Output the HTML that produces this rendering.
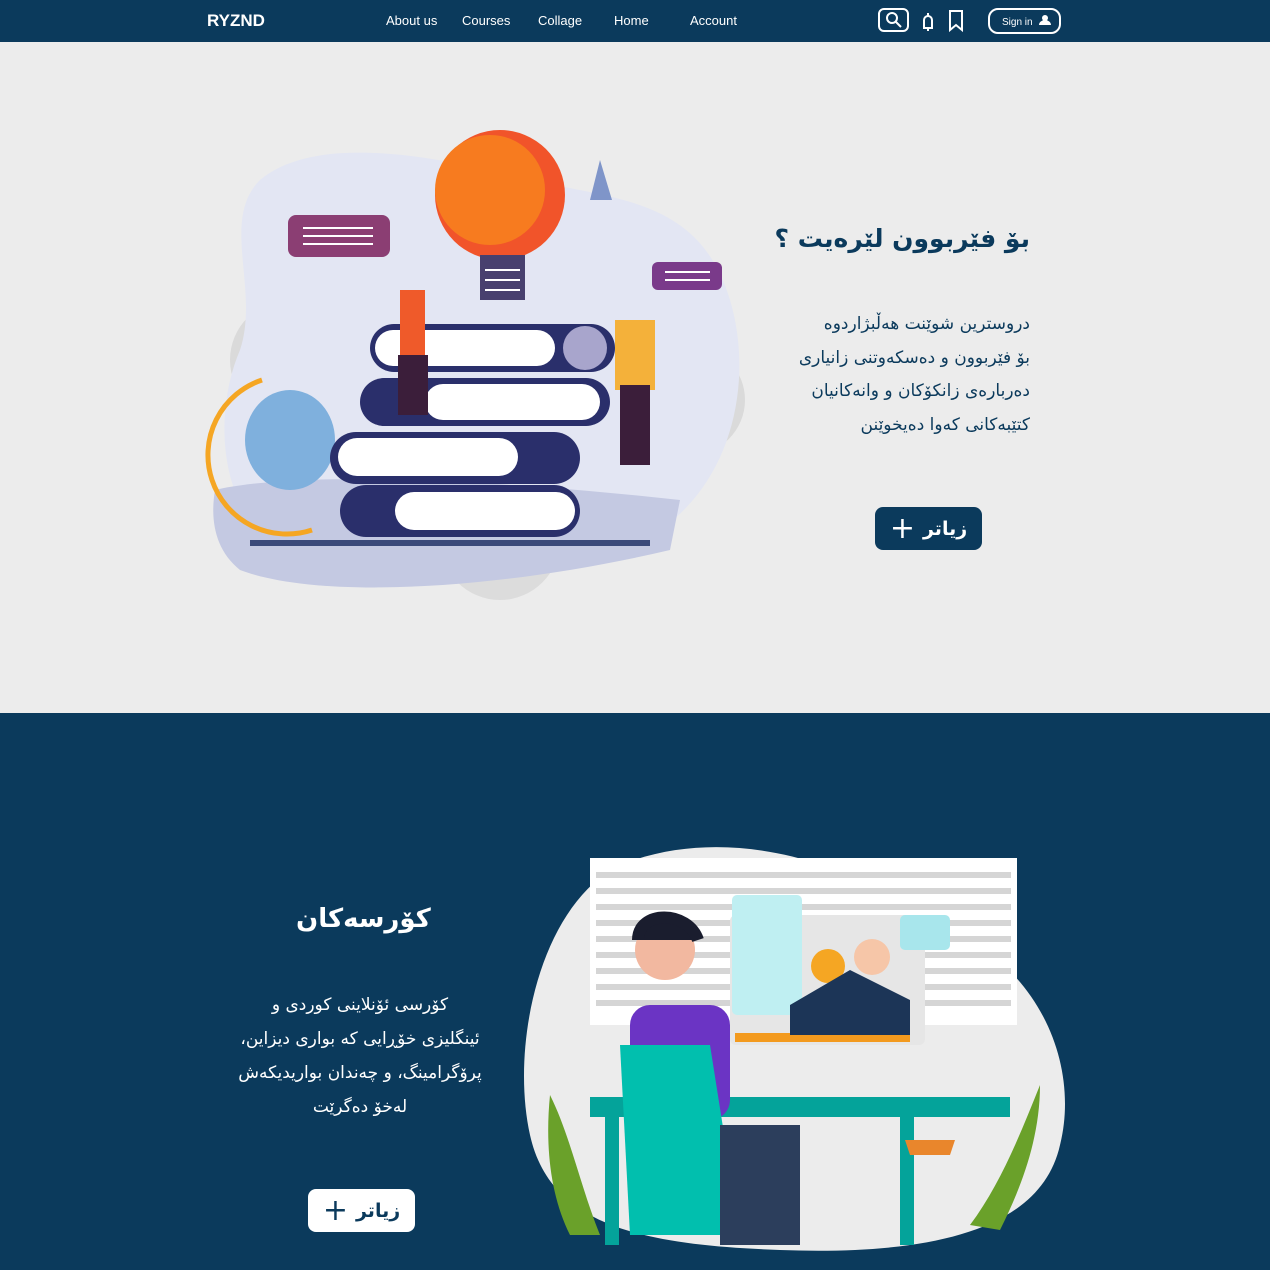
<!DOCTYPE html>
<html><head><meta charset="utf-8"><style>
*{margin:0;padding:0;box-sizing:border-box}
body{width:1270px;height:1270px;overflow:hidden;font-family:"Liberation Sans","DejaVu Sans",sans-serif;background:#ececec;position:relative}
.nav{position:absolute;left:0;top:0;width:1270px;height:42px;background:#0b3a5c;color:#fff}
.nav span{position:absolute;top:13px;font-size:13px}
.sec2{position:absolute;left:0;top:713px;width:1270px;height:557px;background:#0b3a5c}
.ar{font-family:"DejaVu Sans",sans-serif;direction:rtl;position:absolute}
.btn{position:absolute;border-radius:8px;font-weight:bold;font-size:19px;display:flex;align-items:center;justify-content:center;gap:8px;font-family:"DejaVu Sans",sans-serif}
</style></head><body>
<div class="nav">
<span style="left:207px;top:11px;font-weight:bold;font-size:17px">RYZND</span>
<span style="left:386px">About us</span><span style="left:462px">Courses</span><span style="left:538px">Collage</span><span style="left:614px">Home</span><span style="left:690px">Account</span>
<svg style="position:absolute;left:878px;top:8px" width="90" height="26" fill="none" stroke="#fff" stroke-width="2"><rect x="1" y="1" width="29" height="22" rx="5"/><circle cx="14" cy="10" r="5"/><path d="M18 14l5 5"/><path d="M45 20h10M46 19v-7a4 4 0 0 1 8 0v7M50 5v3M50 21v2"/><path d="M72 3h12v19l-6-5-6 5z"/></svg>
<div style="position:absolute;left:988px;top:8px;width:73px;height:26px;border:2px solid #fff;border-radius:10px;font-size:10px;padding:5px 0 0 12px">Sign in <svg width="12" height="10" style="margin-left:4px"><circle cx="6" cy="3" r="3" fill="#fff"/><path d="M0 10a6 5 0 0 1 12 0z" fill="#fff"/></svg></div>
</div>

<svg style="position:absolute;left:200px;top:120px" width="560" height="480">
<circle cx="90" cy="240" r="60" fill="#dadada"/><circle cx="490" cy="280" r="55" fill="#dadada"/><circle cx="300" cy="420" r="60" fill="#dcdcdc"/>
<path d="M60 60C120 10 250 40 330 60C420 80 500 80 530 180C560 280 520 420 380 440C280 460 180 470 100 440C20 410 10 300 40 230C60 170 20 100 60 60z" fill="#e3e6f3"/>
<path d="M15 370C100 350 300 360 480 380L470 430C300 470 120 480 40 450C15 430 10 400 15 370z" fill="#c4c9e2"/>
<path d="M390 80l10 -40 12 40z" fill="#7f95c9"/>
<ellipse cx="90" cy="320" rx="45" ry="50" fill="#7fb0dd"/><path d="M62 260a70 70 0 0 0 50 150" stroke="#f5a623" stroke-width="5" fill="none"/>
<rect x="50" y="420" width="400" height="6" fill="#3b4a7a"/>
<g><rect x="140" y="365" width="240" height="52" rx="26" fill="#2a2f6b"/><rect x="195" y="372" width="180" height="38" rx="19" fill="#fff"/>
<rect x="130" y="312" width="250" height="52" rx="26" fill="#2a2f6b"/><rect x="138" y="318" width="180" height="38" rx="19" fill="#fff"/>
<rect x="160" y="258" width="250" height="48" rx="24" fill="#2a2f6b"/><rect x="225" y="264" width="175" height="36" rx="18" fill="#fff"/>
<rect x="170" y="204" width="245" height="48" rx="24" fill="#2a2f6b"/><rect x="175" y="210" width="180" height="36" rx="18" fill="#fff"/><circle cx="385" cy="228" r="22" fill="#a8a5cc"/></g>
<circle cx="300" cy="75" r="65" fill="#f1542a"/><circle cx="290" cy="70" r="55" fill="#f77b1f"/><rect x="280" y="135" width="45" height="45" fill="#48406e"/>
<path d="M285 150h35M285 160h35M285 170h35" stroke="#fff" stroke-width="2"/>
<rect x="88" y="95" width="102" height="42" rx="8" fill="#8b3e73"/><path d="M103 108h70M103 116h70M103 124h70" stroke="#fff" stroke-width="2"/>
<rect x="452" y="142" width="70" height="28" rx="6" fill="#7a3a8a"/><path d="M465 152h45M465 160h45" stroke="#fff" stroke-width="2"/>
<rect x="200" y="170" width="25" height="65" fill="#ef5a2a"/><rect x="198" y="235" width="30" height="60" fill="#3b1e3a"/>
<rect x="415" y="200" width="40" height="70" fill="#f4b13a"/><rect x="420" y="265" width="30" height="80" fill="#3b1e3a"/>
</svg>

<div class="ar" style="right:240px;top:224px;font-size:25px;font-weight:bold;color:#0b3a5c">بۆ فێربوون لێرەیت ؟</div>
<div class="ar" style="right:240px;top:308px;font-size:17px;line-height:33.5px;color:#0b3a5c;text-align:right;width:300px">دروسترین شوێنت هەڵبژاردوە<br>بۆ فێربوون و دەسکەوتنی زانیاری<br>دەربارەی زانکۆکان و وانەکانیان<br>کتێبەکانی کەوا دەیخوێنن</div>
<div class="btn" style="left:875px;top:507px;width:107px;height:43px;background:#0b3a5c;color:#fff"><span style="font-size:30px;font-weight:normal">+</span> زیاتر</div>

<div class="sec2"></div>
<div class="ar" style="left:296px;top:904px;font-size:26px;font-weight:bold;color:#fff;direction:rtl">کۆرسەکان</div>
<div class="ar" style="left:225px;top:988px;width:270px;font-size:17px;line-height:34px;color:#fff;text-align:center">کۆرسی ئۆنلاینی کوردی و<br>ئینگلیزی خۆڕایی کە بواری دیزاین،<br>پرۆگرامینگ، و چەندان بواریدیکەش<br>لەخۆ دەگرێت</div>
<div class="btn" style="left:308px;top:1189px;width:107px;height:43px;background:#fff;color:#0b3a5c"><span style="font-size:30px;font-weight:normal">+</span> زیاتر</div>

<svg style="position:absolute;left:520px;top:835px" width="560" height="420">
<path d="M100 30C200 -10 320 20 420 90C520 130 560 230 540 310C520 400 400 420 260 415C120 410 30 390 10 300C-10 210 20 70 100 30z" fill="#ececec"/>
<rect x="70" y="23" width="427" height="167" fill="#fff"/>
<g stroke="#d5d5d5" stroke-width="6"><path d="M76 40h415M76 56h415M76 72h415M76 88h415M76 104h415M76 120h415M76 136h415M76 152h415M76 168h415"/></g>
<rect x="210" y="80" width="195" height="130" rx="6" fill="#e6e6e6"/><rect x="212" y="60" width="70" height="120" rx="5" fill="#bfeff2"/>
<rect x="380" y="80" width="50" height="35" rx="5" fill="#a8e6ec"/><circle cx="308" cy="131" r="17" fill="#f5a623"/>
<rect x="215" y="198" width="175" height="9" fill="#f39a1e"/>
<rect x="70" y="262" width="420" height="20" fill="#04a39a"/><rect x="85" y="280" width="14" height="130" fill="#04a39a"/><rect x="380" y="280" width="14" height="130" fill="#04a39a"/>
<rect x="110" y="170" width="100" height="115" rx="20" fill="#6b34c4"/><circle cx="145" cy="115" r="30" fill="#f2b8a0"/><path d="M118 105c0-30 50-30 60 0" fill="#1a1d2e" stroke="#1a1d2e" stroke-width="12"/>
<path d="M100 210h90l30 190h-110z" fill="#01bfae"/><rect x="200" y="290" width="80" height="120" fill="#2c3e5c"/>
<path d="M270 170l60-35 60 30v35h-120z" fill="#1c3557"/><circle cx="352" cy="122" r="18" fill="#f6c6a8"/>
<path d="M30 260c20 40 30 90 50 140h-30c-20-40-25-90-20-140zM520 250c-20 50-40 100-70 140l30 5c20-40 40-90 40-145z" fill="#6aa12a"/>
<path d="M385 305h50l-5 15h-40z" fill="#e9862c"/>
</svg>
</body></html>
